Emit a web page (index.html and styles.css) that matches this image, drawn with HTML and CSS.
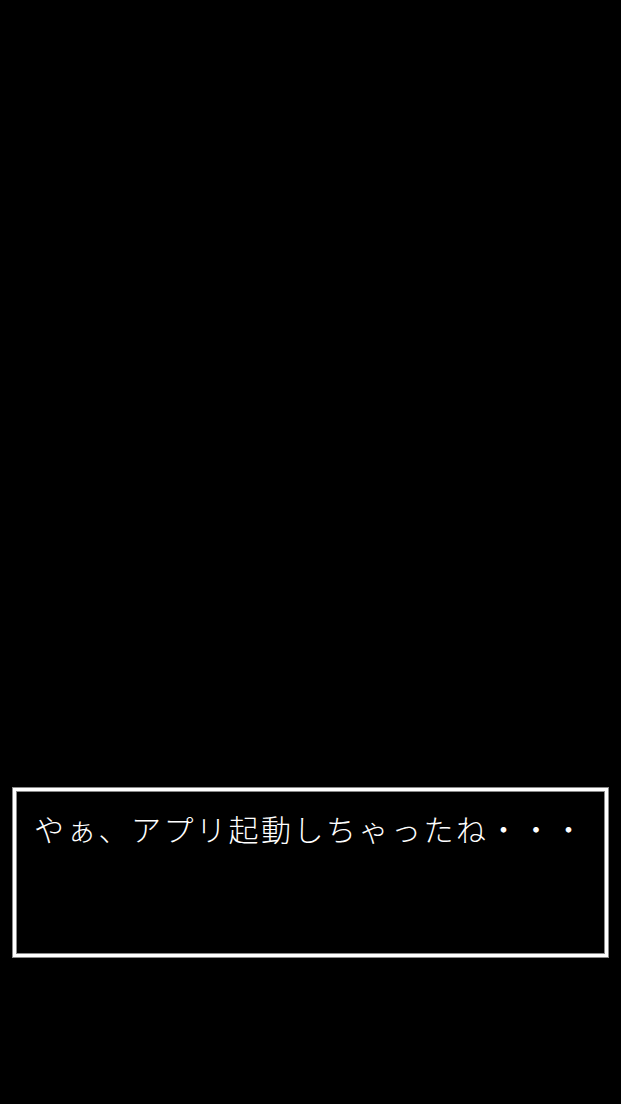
FILE: index.html
```html
<!DOCTYPE html>
<html lang="ja">
<head>
<meta charset="utf-8">
<link rel="stylesheet" href="styles.css">
</head>
<body>
<div class="screen">
  <div class="dialog">
    <p class="message">やぁ、アプリ起動しちゃったね・・・</p>
  </div>
</div>
</body>
</html>
```
FILE: styles.css
```css
html, body {
  margin: 0;
  padding: 0;
  background: #000;
}
.screen {
  height: 1104px;
  display: flex;
  flex-direction: column;
  justify-content: flex-end;
  padding: 0 13px 147px;
  box-sizing: border-box;
}
.dialog {
  height: 169px;
  box-sizing: border-box;
  border: 3px solid #fff;
  box-shadow: 0 0 0 1px #8a8a8a, inset 0 0 0 1px #8a8a8a;
  padding: 15px 18px;
}
.message {
  margin: 0;
  color: #fff;
  font-family: "Noto Sans CJK JP", sans-serif;
  font-weight: 300;
  font-size: 30px;
  letter-spacing: 2.5px;
  line-height: 44px;
  white-space: nowrap;
}
```
